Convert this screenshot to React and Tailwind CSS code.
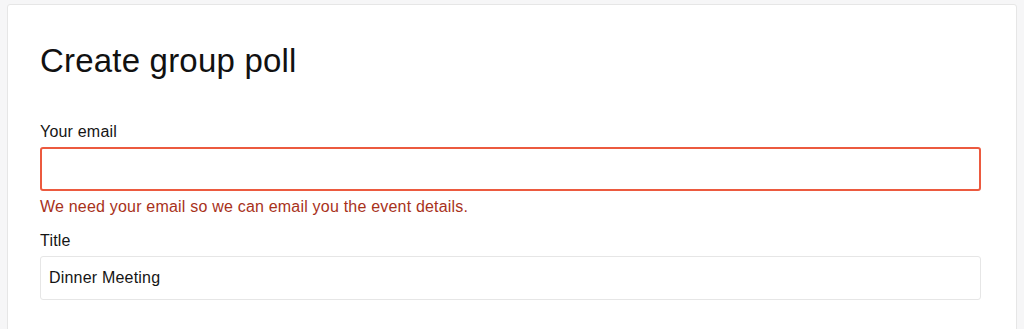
const App = () => {
  return (
    <div
      className="min-h-screen bg-[#f6f6f7] pt-[4px] pl-[7px] overflow-hidden tracking-[0.2px]"
      style={{ fontFamily: '"Liberation Sans", Arial, sans-serif' }}
    >
      <div className="w-[1010px] h-[340px] bg-white border border-[#e6e6e6] rounded-[3px] pt-[36px] pl-[32px] pr-[35px]">
        <h1 className="text-[33px] leading-[40px] text-[#111] font-normal">
          Create group poll
        </h1>

        <form className="mt-[39px]">
          <label className="block text-[16px] leading-[24px] text-[#151515]">
            Your email
          </label>
          <input
            type="email"
            className="mt-[3px] block w-full h-[44px] border-2 border-[#ec5a3f] rounded-[3px] px-2 outline-none"
          />
          <p className="mt-[4px] text-[16px] leading-[24px] text-[#a8321b]">
            We need your email so we can email you the event details.
          </p>

          <label className="mt-[10px] block text-[16px] leading-[24px] text-[#151515]">
            Title
          </label>
          <input
            type="text"
            defaultValue="Dinner Meeting"
            className="mt-[3px] block w-full h-[44px] border border-[#e6e6e6] rounded-[3px] px-2 text-[16px] tracking-[0.2px] text-[#151515] outline-none"
          />
        </form>
      </div>
    </div>
  );
};

export default App;
